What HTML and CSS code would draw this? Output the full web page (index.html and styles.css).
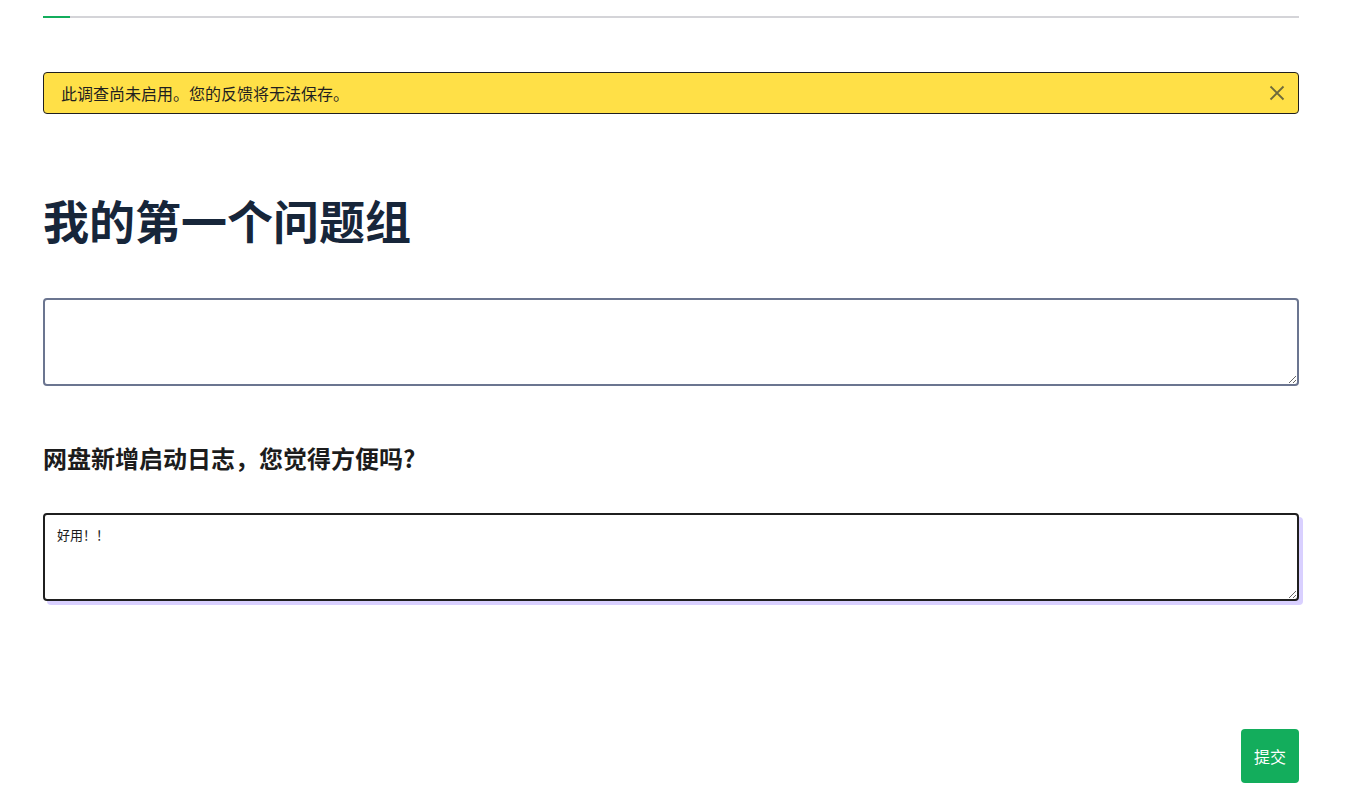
FILE: index.html
```html
<!DOCTYPE html>
<html lang="zh-CN">
<head>
<meta charset="utf-8">
<title>问卷</title>
<link rel="stylesheet" href="styles.css">
</head>
<body>
<div class="page">
  <div class="progress"><div class="progress-fill"></div></div>
  <div class="alert">
    <span class="alert-text">此调查尚未启用。您的反馈将无法保存。</span>
    <button class="alert-close" aria-label="关闭">
      <svg width="16" height="16" viewBox="0 0 16 16"><path d="M1.5 1.5 L14.5 14.5 M14.5 1.5 L1.5 14.5" stroke="currentColor" stroke-width="1.8" fill="none"/></svg>
    </button>
  </div>
  <h1 class="title">我的第一个问题组</h1>
  <textarea class="field"></textarea>
  <h2 class="question">网盘新增启动日志，您觉得方便吗?</h2>
  <textarea class="field field-focus">好用！！</textarea>
  <div class="actions">
    <button class="submit">提交</button>
  </div>
</div>
</body>
</html>
```

FILE: styles.css
```css
* { box-sizing: border-box; }
html, body { margin: 0; padding: 0; background: #ffffff; }
body {
  font-family: "Noto Sans CJK SC", "Noto Sans", "Liberation Sans", sans-serif;
  color: #1a1a1a;
}
.page {
  padding: 16px 51px 0 43px;
  display: flex;
  flex-direction: column;
}
.progress {
  height: 2px;
  background: #d4d4d8;
  width: 100%;
}
.progress-fill {
  width: 27px;
  height: 100%;
  background: #13ad5c;
}
.alert {
  margin-top: 54px;
  height: 42px;
  border: 1px solid #1f1f1f;
  border-radius: 4px;
  background: #ffe047;
  display: flex;
  align-items: center;
  justify-content: space-between;
  padding: 0 12px 0 17px;
}
.alert-text {
  font-size: 16px;
  color: #1f1f1f;
}
.alert-close {
  border: 0;
  background: transparent;
  color: #6e6a3c;
  padding: 0;
  width: 18px;
  height: 18px;
  display: flex;
  align-items: center;
  justify-content: center;
}
.title {
  margin: 75px 0 0 0;
  font-size: 46px;
  line-height: 60px;
  font-weight: 700;
  color: #17263a;
}
.field {
  display: block;
  width: 100%;
  height: 88px;
  margin-top: 49px;
  border: 2px solid #6b7590;
  border-radius: 4px;
  padding: 10px 12px;
  font-family: "Noto Sans CJK SC", "Noto Sans", sans-serif;
  font-size: 13px;
  color: #1a1a1a;
  background: #fff;
  resize: vertical;
  outline: none;
}
.question {
  margin: 56px 0 0 0;
  font-size: 24px;
  line-height: 32px;
  font-weight: 700;
  color: #1c1c1c;
}
.field-focus {
  margin-top: 39px;
  border-color: #1f1f1f;
  box-shadow: 4px 4px 0 #d9d0ff;
}
.actions {
  display: flex;
  justify-content: flex-end;
  margin-top: 128px;
}
.submit {
  width: 58px;
  height: 54px;
  border: 0;
  border-radius: 4px;
  background: #13ad5c;
  color: #ffffff;
  font-family: "Noto Sans CJK SC", sans-serif;
  font-size: 16px;
  padding: 0;
}
```
